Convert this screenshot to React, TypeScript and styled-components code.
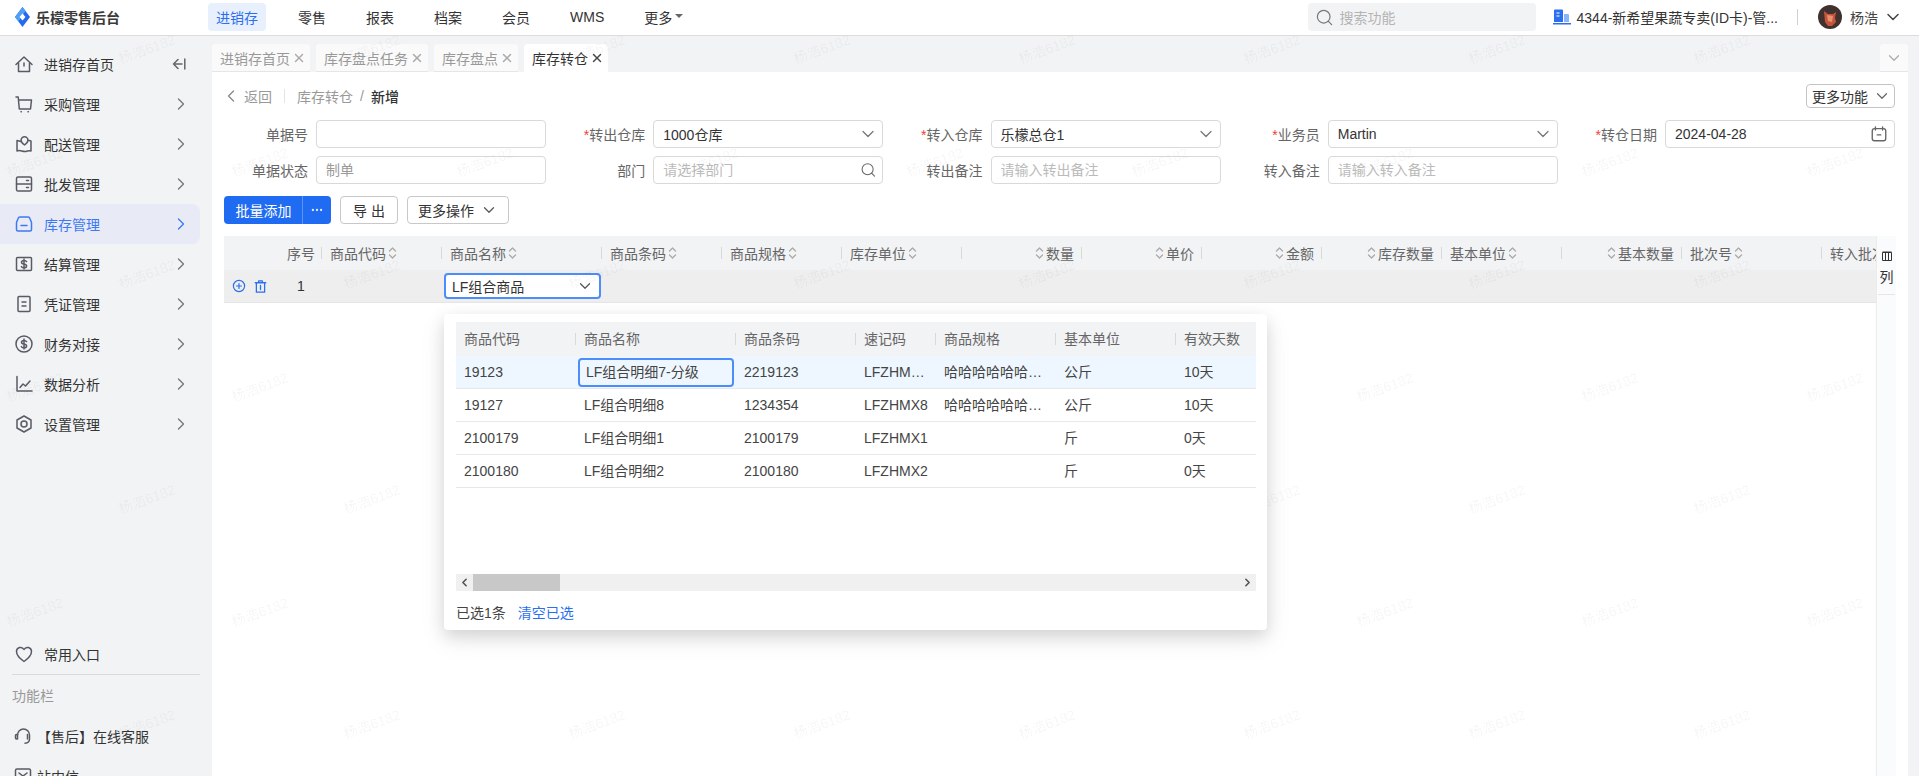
import { ReactNode } from 'react'
import styled, { createGlobalStyle } from 'styled-components'
import { Search, ChevronDown, ChevronRight, ChevronLeft, X, Ellipsis } from 'lucide-react'

const GlobalStyle = createGlobalStyle`
  html, body {
    margin: 0;
    padding: 0;
    overflow: hidden;
    background: #f2f3f5;
  }
  * {
    box-sizing: border-box;
  }
  body {
    font-family: "Liberation Sans", "Noto Sans CJK SC", sans-serif;
    font-size: 14px;
    color: #333;
  }
`

const Page = styled.div`
  position: relative;
  display: flex;
  flex-direction: column;
  width: 1919px;
  height: 776px;
  overflow: hidden;
`

/* watermark layer, sits above the page but under the dropdown */
const WatermarkLayer = styled.div`
  position: absolute;
  inset: -8px 0 0 0;
  z-index: 10;
  overflow: hidden;
  pointer-events: none;
`
const WatermarkRow = styled.div<{ $shift: number }>`
  display: flex;
  align-items: center;
  gap: 165px;
  height: 112.5px;
  padding-left: ${props => props.$shift}px;
`
const WatermarkCell = styled.span`
  flex: 0 0 60px;
  font-size: 14px;
  white-space: nowrap;
  color: rgba(0, 0, 0, 0.05);
  transform: rotate(-20deg);
`

const TopBar = styled.header`
  flex: 0 0 36px;
  display: flex;
  align-items: center;
  height: 36px;
  padding: 0 16px 1px 0;
  background: #fff;
  border-bottom: 1px solid #dcdcdc;
`
const Brand = styled.div`
  flex: 0 0 208px;
  display: flex;
  align-items: center;
  gap: 6px;
  padding-left: 15px;
  font-size: 14px;
  font-weight: 700;
  color: #3a3a3a;
`
const TopNav = styled.nav`
  display: flex;
  align-items: center;
  gap: 24px;
`
const TopNavItem = styled.div<{ $active?: boolean }>`
  display: flex;
  align-items: center;
  gap: 3px;
  height: 28px;
  padding: 0 8px;
  border-radius: 4px;
  color: ${props => (props.$active ? '#2b6ff0' : '#333')};
  background: ${props => (props.$active ? '#e8f0fd' : 'transparent')};
`
const Caret = styled.span`
  width: 0;
  height: 0;
  margin-top: -2px;
  border: 4px solid transparent;
  border-top: 4px solid #666;
  border-bottom: 0;
`
const TopSearch = styled.div`
  display: flex;
  align-items: center;
  gap: 6px;
  width: 228px;
  height: 28px;
  margin-left: auto;
  padding-left: 7px;
  border-radius: 4px;
  color: #b4b4b4;
  background: #f2f3f5;
`
const Store = styled.div`
  display: flex;
  align-items: center;
  gap: 6px;
  margin-left: 17px;
  color: #333;
  white-space: nowrap;
`
const TopDivider = styled.span`
  width: 1px;
  height: 16px;
  margin: 0 20px 0 19px;
  background: #d0d0d0;
`
const UserName = styled.span`
  margin-left: 8px;
  margin-right: 5px;
  color: #444;
`

const Body = styled.div`
  flex: 1;
  display: flex;
  min-height: 0;
`

const Sidebar = styled.aside`
  flex: 0 0 212px;
  display: flex;
  flex-direction: column;
  padding-top: 8px;
  overflow: hidden;
  background: #f2f3f5;
`
const SideNav = styled.div`
  flex: 0 0 591px;
`
const SideItem = styled.div<{ $active?: boolean }>`
  display: flex;
  align-items: center;
  gap: 10px;
  width: 200px;
  height: 40px;
  padding: 0 14px;
  border-radius: 0 8px 8px 0;
  color: ${props => (props.$active ? '#3d78f5' : '#333')};
  background: ${props => (props.$active ? '#e8ebf5' : 'transparent')};
`
const SideEnd = styled.span<{ $pull?: number }>`
  display: flex;
  margin-left: auto;
  margin-right: ${props => props.$pull ?? 0}px;
`
const CommonEntry = styled.div`
  flex: 0 0 40px;
  display: flex;
  align-items: center;
  gap: 10px;
  width: 188px;
  margin-left: 12px;
  padding-left: 2px;
  padding-bottom: 2px;
  border-bottom: 1px solid #dadada;
`
const SideCaption = styled.div`
  flex: 0 0 41px;
  display: flex;
  align-items: center;
  padding: 0 0 2px 12px;
  color: #999;
`
const ToolItem = styled.div`
  flex: 0 0 40px;
  display: flex;
  align-items: center;
  gap: 4px;
  padding-left: 13px;
`

const Main = styled.main`
  flex: 1;
  display: flex;
  flex-direction: column;
  min-width: 0;
  padding-right: 11px;
`
const TabStrip = styled.div`
  flex: 0 0 36px;
  display: flex;
  align-items: flex-end;
  gap: 6px;
`
const Tab = styled.div<{ $active?: boolean }>`
  display: flex;
  align-items: center;
  gap: 2px;
  height: 28px;
  padding: 0 4px 0 8px;
  border-radius: 4px 4px 0 0;
  color: ${props => (props.$active ? '#333' : '#999')};
  background: ${props => (props.$active ? '#fff' : '#fafafa')};
  border-bottom: ${props => (props.$active ? '0' : '1px solid #e6e6e6')};
`
const TabToggle = styled.div`
  display: flex;
  align-items: center;
  justify-content: center;
  width: 28px;
  height: 28px;
  margin-left: auto;
  border-radius: 4px 4px 0 0;
  background: #fafafa;
  border-bottom: 1px solid #e6e6e6;
`

const Content = styled.section`
  flex: 1;
  display: flex;
  flex-direction: column;
  min-height: 0;
  padding: 12px 13px 0 12px;
  background: #fff;
`
const PageHead = styled.div`
  flex: 0 0 24px;
  display: flex;
  align-items: center;
`
const BackLink = styled.span`
  display: flex;
  align-items: center;
  gap: 3px;
  height: 14px;
  margin-left: -3px;
  padding-right: 12px;
  color: #999;
  border-right: 1px solid #e4e4e4;
`
const Crumb = styled.span`
  margin-left: 12px;
  color: #999;
`
const CrumbSlash = styled.span`
  margin: 0 7px;
  color: #999;
`
const CrumbNow = styled.span`
  color: #333;
  font-weight: 500;
`
const FunctionButton = styled.div`
  display: flex;
  align-items: center;
  justify-content: space-between;
  width: 89px;
  height: 24px;
  margin-left: auto;
  padding: 0 3px 0 5px;
  border: 1px solid #c4c4c4;
  border-radius: 4px;
`

const Form = styled.div`
  display: grid;
  grid-template-columns: 322px repeat(4, 337.25px);
  grid-auto-rows: 28px;
  row-gap: 8px;
  margin-top: 12px;
`
const Field = styled.div`
  display: flex;
  align-items: center;
  justify-content: flex-end;
  gap: 8px;
`
const FieldLabel = styled.label`
  color: #666;
  white-space: nowrap;
`
const Required = styled.span`
  color: #f5393d;
`
const Control = styled.div`
  flex: 0 0 230px;
  display: flex;
  align-items: center;
  justify-content: space-between;
  height: 28px;
  padding: 0 6px 0 9px;
  border: 1px solid #d9d9d9;
  border-radius: 4px;
  color: #333;
`
const ControlInput = styled.input<{ $status?: boolean }>`
  width: 100%;
  height: 100%;
  padding: 0;
  border: none;
  outline: none;
  background: transparent;
  font: inherit;
  color: #333;

  &::placeholder {
    color: ${props => (props.$status ? '#999' : '#bbb')};
    opacity: 1;
  }
`
const SelectArrow = styled(ChevronDown).attrs({ size: 20, color: '#777', strokeWidth: 1.5 })`
  flex: none;
  margin-right: -2px;
`

const Toolbar = styled.div`
  flex: 0 0 28px;
  display: flex;
  gap: 9px;
  margin-top: 12px;
`
const PrimaryGroup = styled.div`
  display: flex;
  overflow: hidden;
  border-radius: 4px;
  color: #fff;
  background: #1f6cf3;
`
const PrimaryMain = styled.div`
  display: flex;
  align-items: center;
  justify-content: center;
  width: 79px;
  padding-left: 1px;
  border-right: 1px solid #5c93f6;
`
const PrimaryMore = styled.div`
  display: flex;
  align-items: center;
  justify-content: center;
  width: 28px;
`
const GhostButton = styled.div<{ $w: number }>`
  display: flex;
  align-items: center;
  justify-content: center;
  gap: 6px;
  width: ${props => props.$w}px;
  border: 1px solid #c8c8c8;
  border-radius: 4px;
`

const TableWrap = styled.div`
  position: relative;
  flex: 1;
  display: flex;
  min-height: 0;
  margin-top: 12px;
`
const TableScroll = styled.div`
  flex: 0 0 1652px;
  overflow: hidden;
`
const HeadRow = styled.div`
  display: flex;
  width: max-content;
  min-width: 100%;
  height: 34px;
  background: #f2f3f5;
`
const HeadCell = styled.div<{ $w: number, $align: string, $last?: boolean }>`
  position: relative;
  flex: 0 0 ${props => props.$w}px;
  min-width: 0;
  display: flex;
  align-items: center;
  justify-content: ${props => props.$align};
  gap: 2px;
  padding: ${props => (props.$align === 'center' ? '0 0 1px' : '0 8px 1px 8px')};
  color: #666;
  white-space: nowrap;

  &::after {
    content: '';
    display: ${props => (props.$last ? 'none' : 'block')};
    position: absolute;
    right: 0;
    top: 11px;
    width: 1px;
    height: 12px;
    background: #d9d9d9;
  }
`
const DataRow = styled.div`
  display: flex;
  width: max-content;
  min-width: 100%;
  height: 33px;
  background: #eee;
  border-bottom: 1px solid #e6e6e6;
`
const RowActions = styled.div`
  flex: 0 0 56px;
  display: flex;
  align-items: center;
  gap: 7px;
  padding-left: 8px;
`
const RowIndex = styled.div`
  flex: 0 0 42px;
  display: flex;
  align-items: center;
  justify-content: center;
`
const RowBlank = styled.div<{ $w: number }>`
  flex: 0 0 ${props => props.$w}px;
`
const RowSelect = styled.div`
  flex: 0 0 157px;
  display: flex;
  align-items: center;
  justify-content: space-between;
  height: 26px;
  margin: 3px 0 0 2px;
  padding: 0 5px 0 6px;
  border: 2px solid #4c8dfb;
  border-radius: 4px;
  background: #fff;
`

const ColumnRail = styled.div`
  flex: 0 0 20px;
  display: flex;
  flex-direction: column;
  background: #fafbfc;
  border-left: 1px solid #ececec;
`
const ColumnButton = styled.div`
  display: flex;
  flex-direction: column;
  align-items: center;
  gap: 5px;
  height: 59px;
  padding-top: 15px;
  margin: 0 1px;
  border-bottom: 1px solid #e6e6e6;
  color: #333;
`

const Popover = styled.div`
  position: absolute;
  top: 78px;
  left: 220px;
  z-index: 20;
  display: flex;
  flex-direction: column;
  width: 823px;
  height: 316px;
  padding: 8px 11px 0 12px;
  border-radius: 4px;
  background: #fff;
  box-shadow: 0 9px 28px rgba(0, 0, 0, 0.08), 0 6px 16px rgba(0, 0, 0, 0.12);
`
const PopHead = styled.div`
  flex: 0 0 34px;
  display: flex;
  background: #f2f3f5;
`
const PopHeadCell = styled.div<{ $w: number, $last?: boolean }>`
  position: relative;
  flex: 0 0 ${props => props.$w}px;
  display: flex;
  align-items: center;
  padding: 0 0 3px 8px;
  color: #666;

  &::after {
    content: '';
    display: ${props => (props.$last ? 'none' : 'block')};
    position: absolute;
    right: 0;
    top: 11px;
    width: 1px;
    height: 12px;
    background: #d9d9d9;
  }
`
const PopRow = styled.div<{ $selected?: boolean }>`
  flex: 0 0 33px;
  display: flex;
  background: ${props => (props.$selected ? '#eef7ff' : '#fff')};
  border-bottom: 1px solid #e8e8e8;
`
const PopCell = styled.div<{ $w: number }>`
  flex: 0 0 ${props => props.$w}px;
  width: ${props => props.$w}px;
  height: 32px;
  padding: 0 8px;
  overflow: hidden;
  color: #444;
  line-height: 33px;
  white-space: nowrap;
  text-overflow: ellipsis;
`
const PopCellFocus = styled.div`
  flex: 0 0 156px;
  height: 29px;
  margin: 2px 2px 0;
  padding: 0 6px;
  overflow: hidden;
  color: #444;
  line-height: 25px;
  white-space: nowrap;
  border: 2px solid #4c8dfb;
  border-radius: 4px;
`
const ScrollTrack = styled.div`
  flex: 0 0 17px;
  display: flex;
  align-items: center;
  justify-content: space-between;
  margin-top: 86px;
  background: #f0f0f0;
`
const ScrollSide = styled.div`
  display: flex;
  align-items: center;
  height: 100%;
`
const ScrollArrow = styled.div`
  display: flex;
  align-items: center;
  justify-content: center;
  width: 17px;
  height: 17px;
  color: #555;
`
const ScrollThumb = styled.div`
  width: 87px;
  height: 17px;
  background: #c8c8c8;
`
const PopFooter = styled.div`
  flex: 0 0 39px;
  display: flex;
  align-items: center;
  gap: 12px;
  padding-top: 3px;
  color: #444;
`
const PopLink = styled.span`
  color: #2b6ff0;
`

const Glyph = ({ children, color = '#5a5a66', size = 20, sw = 1.5 }: { children: ReactNode, color?: string, size?: number, sw?: number }) => (
  <svg width={size} height={size} viewBox="0 0 20 20" fill="none" stroke={color} strokeWidth={sw} strokeLinecap="round" strokeLinejoin="round" style={{ flex: 'none' }}>
    {children}
  </svg>
)

const DOLLAR = 'M12.6 7.6c-.5-.8-1.4-1.2-2.6-1.2-1.5 0-2.5.7-2.5 1.8s1 1.6 2.5 1.9 2.6.8 2.6 1.9-1.1 1.8-2.6 1.8c-1.2 0-2.1-.4-2.6-1.2M10 5v10'

const navIcons: Record<string, ReactNode> = {
  home: <><path d="M2 10.5 10 3l8 7.5" /><path d="M4.5 9v8.5h11V9" /><path d="M10 9v3" /></>,
  cart: <><path d="M2 3h2.2l1.1 12H16.5l1-9H5" /><path d="M7 17.8h.4M14 17.8h.4" /></>,
  map: <><path d="M7 7.5 3 6.5V17c3-1.4 5.5 1 9 .4 2-.4 3.5-1.2 5-.4V7l-3-.7" /><path d="M10.5 2.8a3.4 3.4 0 0 1 3.4 3.4c0 2.4-3.4 4.8-3.4 4.8S7.1 8.6 7.1 6.2a3.4 3.4 0 0 1 3.4-3.4z" /></>,
  server: <><rect x="2.5" y="3" width="15" height="14" rx="1.6" /><path d="M2.5 10h15M12.5 6.5h2M12.5 13.5h2" /></>,
  stock: <><path d="M6 3h8c.9 0 1.7.6 1.9 1.4L17.5 8.5v7a1.5 1.5 0 0 1-1.5 1.5H4a1.5 1.5 0 0 1-1.5-1.5v-7l1.6-4.1C4.3 3.6 5.1 3 6 3z" /><path d="M7 11.5h6" /></>,
  settle: <><rect x="2.5" y="3.5" width="15" height="13" rx="1" /><path d={DOLLAR} /></>,
  voucher: <><rect x="4" y="2.5" width="12" height="15" rx="1" /><path d="M8 8h4M8 12h4" /></>,
  finance: <><circle cx="10" cy="10" r="8" /><path d={DOLLAR} /></>,
  chart: <><path d="M3 2.5V17h15" /><path d="m6 13.5 3-3.5 2.5 2L16 7" /></>,
  setting: <><path d="M10 2l7 4v8l-7 4-7-4V6z" /><circle cx="10" cy="10" r="3" /></>,
}

const sideItems = [
  { name: '采购管理', icon: 'cart' },
  { name: '配送管理', icon: 'map' },
  { name: '批发管理', icon: 'server' },
  { name: '库存管理', icon: 'stock', active: true },
  { name: '结算管理', icon: 'settle' },
  { name: '凭证管理', icon: 'voucher' },
  { name: '财务对接', icon: 'finance' },
  { name: '数据分析', icon: 'chart' },
  { name: '设置管理', icon: 'setting' },
]

const SortIcon = () => (
  <svg width="9" height="14" viewBox="0 0 9 14" fill="none" stroke="#a8a8a8" strokeWidth="1.2" strokeLinecap="round" strokeLinejoin="round" style={{ flex: 'none' }}>
    <path d="M1.5 5 4.5 2l3 3M1.5 9l3 3 3-3" />
  </svg>
)

const columns = [
  { label: '商品代码', w: 120 },
  { label: '商品名称', w: 160 },
  { label: '商品条码', w: 120 },
  { label: '商品规格', w: 120 },
  { label: '库存单位', w: 120 },
  { label: '数量', w: 120, right: true },
  { label: '单价', w: 120, right: true },
  { label: '金额', w: 120, right: true },
  { label: '库存数量', w: 120, right: true },
  { label: '基本单位', w: 120 },
  { label: '基本数量', w: 120, right: true },
  { label: '批次号', w: 140 },
]

const popColumns = [
  { label: '商品代码', w: 120 },
  { label: '商品名称', w: 160 },
  { label: '商品条码', w: 120 },
  { label: '速记码', w: 80 },
  { label: '商品规格', w: 120 },
  { label: '基本单位', w: 120 },
  { label: '有效天数', w: 80 },
]

const popRows = [
  ['19123', 'LF组合明细7-分级', '2219123', 'LFZHMX7-FJ', '哈哈哈哈哈哈哈哈哈', '公斤', '10天'],
  ['19127', 'LF组合明细8', '1234354', 'LFZHMX8', '哈哈哈哈哈哈哈哈哈', '公斤', '10天'],
  ['2100179', 'LF组合明细1', '2100179', 'LFZHMX1', '', '斤', '0天'],
  ['2100180', 'LF组合明细2', '2100180', 'LFZHMX2', '', '斤', '0天'],
]

const tabs = ['进销存首页', '库存盘点任务', '库存盘点', '库存转仓']

export default function App() {
  return (
    <Page>
      <GlobalStyle />
      <WatermarkLayer>
        {Array.from({ length: 7 }, (_, r) => (
          <WatermarkRow key={r} $shift={r % 2 === 0 ? 117 : 5}>
            {Array.from({ length: r % 2 === 0 ? 8 : 9 }, (_, c) => <WatermarkCell key={c}>杨浩6182</WatermarkCell>)}
          </WatermarkRow>
        ))}
      </WatermarkLayer>

      <TopBar>
        <Brand>
          <svg width="15" height="20" viewBox="0 0 15 20" style={{ flex: 'none' }}>
            <path d="M7.5 0 15 10l-7.5 10L0 10z" fill="#2469ef" />
            <path d="M7.5 0 0 10l3.5 4.5L6 10.5 10.5 4z" fill="#4f9ff6" />
            <path d="M7.5 6.5 10.5 10l-3 3.5L4.5 10z" fill="#fff" />
          </svg>
          乐檬零售后台
        </Brand>
        <TopNav>
          <TopNavItem $active>进销存</TopNavItem>
          <TopNavItem>零售</TopNavItem>
          <TopNavItem>报表</TopNavItem>
          <TopNavItem>档案</TopNavItem>
          <TopNavItem>会员</TopNavItem>
          <TopNavItem>WMS</TopNavItem>
          <TopNavItem>更多<Caret /></TopNavItem>
        </TopNav>
        <TopSearch>
          <Search size={19} color="#777" strokeWidth={1.5} />
          搜索功能
        </TopSearch>
        <Store>
          <svg width="18" height="16" viewBox="0 0 18 16" style={{ flex: 'none' }}>
            <path d="M1 1.5a1 1 0 0 1 1-1h7a1 1 0 0 1 1 1V13H1z" fill="#2b6ff0" />
            <path d="M11 5h4a1 1 0 0 1 1 1v7h-5z" fill="#8db4f7" />
            <path d="M0 14h18v1.5H0z" fill="#2b6ff0" />
            <path d="M3.5 4h3M3.5 7h3" stroke="#fff" strokeWidth="1.2" />
          </svg>
          4344-新希望果蔬专卖(ID卡)-管...
        </Store>
        <TopDivider />
        <svg width="24" height="24" viewBox="0 0 24 24" style={{ flex: 'none' }}>
          <circle cx="12" cy="12" r="12" fill="#40302e" />
          <path d="M6 6l4 3h5l3-2-1 6 1 4-4 4h-4l-3-4z" fill="#c4553c" />
          <path d="M9 10l6 1-1 6-4-1z" fill="#e8916e" />
        </svg>
        <UserName>杨浩</UserName>
        <ChevronDown size={20} color="#444" strokeWidth={1.8} />
      </TopBar>

      <Body>
        <Sidebar>
          <SideNav>
            <SideItem>
              <Glyph>{navIcons.home}</Glyph>
              进销存首页
              <SideEnd>
                <svg width="14" height="12" viewBox="0 0 14 12" fill="none" stroke="#666" strokeWidth="1.5" strokeLinecap="round" strokeLinejoin="round">
                  <path d="M6 1.5 1.5 6 6 10.5M1.5 6H10M12.8 1v10" />
                </svg>
              </SideEnd>
            </SideItem>
            {sideItems.map(item => (
              <SideItem key={item.name} $active={item.active}>
                <Glyph color={item.active ? '#3d78f5' : '#5a5a66'}>{navIcons[item.icon]}</Glyph>
                {item.name}
                <SideEnd $pull={-5}>
                  <ChevronRight size={20} color={item.active ? '#3d78f5' : '#777'} strokeWidth={1.6} />
                </SideEnd>
              </SideItem>
            ))}
          </SideNav>
          <CommonEntry>
            <Glyph><path d="M10 17.5C5 14 2.5 11 2.5 7.5a4 4 0 0 1 7.5-2 4 4 0 0 1 7.5 2c0 3.5-2.5 6.5-7.5 10z" /></Glyph>
            常用入口
          </CommonEntry>
          <SideCaption>功能栏</SideCaption>
          <ToolItem>
            <Glyph>
              <path d="M4.5 9a6 6 0 0 1 12 0v4c0 2.5-1.8 4-4.5 4.2" />
              <path d="M4.5 8.5h-1a1 1 0 0 0-1 1V12a1 1 0 0 0 1 1h1z" />
              <path d="M14.5 8.5V13" />
            </Glyph>
            【售后】在线客服
          </ToolItem>
          <ToolItem>
            <Glyph><rect x="2.5" y="3" width="15" height="13" rx="1.5" /><path d="m6 7 4 3 4-3" /></Glyph>
            站内信
          </ToolItem>
        </Sidebar>

        <Main>
          <TabStrip>
            {tabs.map((tab, i) => {
              const active = i === tabs.length - 1
              return (
                <Tab key={tab} $active={active}>
                  {tab}
                  <X size={14} color={active ? '#444' : '#aaa'} strokeWidth={2.5} />
                </Tab>
              )
            })}
            <TabToggle><ChevronDown size={18} color="#aaa" strokeWidth={1.6} /></TabToggle>
          </TabStrip>

          <Content>
            <PageHead>
              <BackLink><ChevronLeft size={20} color="#888" strokeWidth={1.5} />返回</BackLink>
              <Crumb>库存转仓</Crumb>
              <CrumbSlash>/</CrumbSlash>
              <CrumbNow>新增</CrumbNow>
              <FunctionButton>更多功能<ChevronDown size={18} color="#666" strokeWidth={1.6} /></FunctionButton>
            </PageHead>

            <Form>
              <Field>
                <FieldLabel>单据号</FieldLabel>
                <Control><ControlInput readOnly /></Control>
              </Field>
              <Field>
                <FieldLabel><Required>*</Required>转出仓库</FieldLabel>
                <Control>1000仓库<SelectArrow /></Control>
              </Field>
              <Field>
                <FieldLabel><Required>*</Required>转入仓库</FieldLabel>
                <Control>乐檬总仓1<SelectArrow /></Control>
              </Field>
              <Field>
                <FieldLabel><Required>*</Required>业务员</FieldLabel>
                <Control>Martin<SelectArrow /></Control>
              </Field>
              <Field>
                <FieldLabel><Required>*</Required>转仓日期</FieldLabel>
                <Control>
                  2024-04-28
                  <Glyph size={18} color="#666">
                    <rect x="2.5" y="4" width="15" height="13.5" rx="2.5" />
                    <path d="M6 2v3.5M14 2v3.5M8 11h4" />
                  </Glyph>
                </Control>
              </Field>
              <Field>
                <FieldLabel>单据状态</FieldLabel>
                <Control><ControlInput readOnly $status placeholder="制单" /></Control>
              </Field>
              <Field>
                <FieldLabel>部门</FieldLabel>
                <Control><ControlInput readOnly placeholder="请选择部门" /><Search size={18} color="#666" strokeWidth={1.5} /></Control>
              </Field>
              <Field>
                <FieldLabel>转出备注</FieldLabel>
                <Control><ControlInput readOnly placeholder="请输入转出备注" /></Control>
              </Field>
              <Field>
                <FieldLabel>转入备注</FieldLabel>
                <Control><ControlInput readOnly placeholder="请输入转入备注" /></Control>
              </Field>
            </Form>

            <Toolbar>
              <PrimaryGroup>
                <PrimaryMain>批量添加</PrimaryMain>
                <PrimaryMore><Ellipsis size={14} color="#dfe9fd" strokeWidth={2} /></PrimaryMore>
              </PrimaryGroup>
              <GhostButton $w={58}>导 出</GhostButton>
              <GhostButton $w={102}>更多操作<ChevronDown size={18} color="#555" strokeWidth={1.6} /></GhostButton>
            </Toolbar>

            <TableWrap>
              <TableScroll>
                <HeadRow>
                  <RowBlank $w={56} />
                  <HeadCell $w={42} $align="center">序号</HeadCell>
                  {columns.map(col => (
                    <HeadCell key={col.label} $w={col.w} $align={col.right ? 'flex-end' : 'flex-start'}>
                      {col.right && <SortIcon />}
                      {col.label}
                      {!col.right && <SortIcon />}
                    </HeadCell>
                  ))}
                  <HeadCell $w={120} $align="flex-start" $last>转入批次号</HeadCell>
                </HeadRow>
                <DataRow>
                  <RowActions>
                    <Glyph size={14} color="#2b6ff0" sw={1.7}><circle cx="10" cy="10" r="8" /><path d="M10 6.5v7M6.5 10h7" /></Glyph>
                    <Glyph size={15} color="#2b6ff0" sw={1.7}><path d="M3 5h14M7.5 5V2.5h5V5M4.5 5v12.5h11V5M10 8.5V14" /></Glyph>
                  </RowActions>
                  <RowIndex>1</RowIndex>
                  <RowBlank $w={120} />
                  <RowSelect>LF组合商品<ChevronDown size={18} color="#555" strokeWidth={1.6} /></RowSelect>
                </DataRow>
              </TableScroll>
              <ColumnRail>
                <ColumnButton>
                  <svg width="10" height="10" viewBox="0 0 10 10" fill="none" stroke="#333" strokeWidth="1">
                    <path d="M.5 1.5h9v8h-9zM3.5 1.5v8M6.5 1.5v8M.5 1h9" />
                  </svg>
                  列
                </ColumnButton>
              </ColumnRail>

              <Popover>
                <PopHead>
                  {popColumns.map((col, i) => (
                    <PopHeadCell key={col.label} $w={col.w} $last={i === popColumns.length - 1}>{col.label}</PopHeadCell>
                  ))}
                </PopHead>
                {popRows.map((row, r) => (
                  <PopRow key={row[0]} $selected={r === 0}>
                    {row.map((text, c) => (
                      r === 0 && c === 1
                        ? <PopCellFocus key={c}>{text}</PopCellFocus>
                        : <PopCell key={c} $w={popColumns[c].w}>{text}</PopCell>
                    ))}
                  </PopRow>
                ))}
                <ScrollTrack>
                  <ScrollSide>
                    <ScrollArrow><ChevronLeft size={13} strokeWidth={3} /></ScrollArrow>
                    <ScrollThumb />
                  </ScrollSide>
                  <ScrollArrow><ChevronRight size={13} strokeWidth={3} /></ScrollArrow>
                </ScrollTrack>
                <PopFooter>
                  已选1条
                  <PopLink>清空已选</PopLink>
                </PopFooter>
              </Popover>
            </TableWrap>
          </Content>
        </Main>
      </Body>
    </Page>
  )
}
